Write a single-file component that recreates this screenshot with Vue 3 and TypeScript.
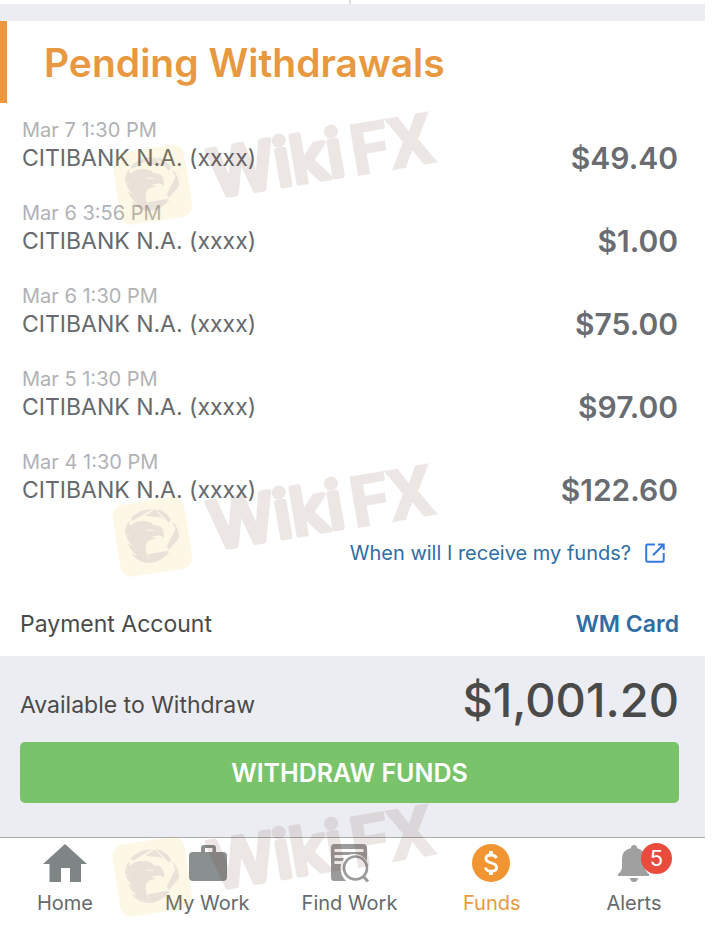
<script setup lang="ts">
interface Withdrawal {
  date: string
  account: string
  amount: string
}

type TabId = 'home' | 'work' | 'find' | 'funds' | 'alerts'

interface Tab {
  id: TabId
  label: string
  badge?: number
}

const withdrawals: Withdrawal[] = [
  { date: 'Mar 7 1:30 PM', account: 'CITIBANK N.A. (xxxx)', amount: '$49.40' },
  { date: 'Mar 6 3:56 PM', account: 'CITIBANK N.A. (xxxx)', amount: '$1.00' },
  { date: 'Mar 6 1:30 PM', account: 'CITIBANK N.A. (xxxx)', amount: '$75.00' },
  { date: 'Mar 5 1:30 PM', account: 'CITIBANK N.A. (xxxx)', amount: '$97.00' },
  { date: 'Mar 4 1:30 PM', account: 'CITIBANK N.A. (xxxx)', amount: '$122.60' },
]

const tabs: Tab[] = [
  { id: 'home', label: 'Home' },
  { id: 'work', label: 'My Work' },
  { id: 'find', label: 'Find Work' },
  { id: 'funds', label: 'Funds' },
  { id: 'alerts', label: 'Alerts', badge: 5 },
]

const activeTab: TabId = 'funds'
const watermarks: string[] = ['first', 'second', 'third']
</script>

<template>
  <div class="page">
    <div class="split"><span></span><span></span></div>
    <div class="band"></div>

    <main>
      <h1 class="title">Pending Withdrawals</h1>

      <ul class="list">
        <li v-for="item in withdrawals" :key="item.date" class="row">
          <span class="date">{{ item.date }}</span>
          <span class="account">{{ item.account }}</span>
          <span class="amount">{{ item.amount }}</span>
        </li>
      </ul>

      <a class="help" href="#funds-help">
        <span>When will I receive my funds?</span>
        <svg class="external" viewBox="0 0 20 20" aria-hidden="true">
          <path d="M10 1.4H2.6Q1.2 1.4 1.2 2.8V17.2Q1.2 18.7 2.6 18.7H17.2Q18.7 18.7 18.7 17.2V10M13 1.4H18.7V7M18.4 1.7L8 12.2" />
        </svg>
      </a>

      <div class="payment">
        <span>Payment Account</span>
        <a href="#payment-account">WM Card</a>
      </div>

      <section class="available">
        <div class="balance">
          <span class="balance-label">Available to Withdraw</span>
          <span class="balance-value">$1,001.20</span>
        </div>
        <button class="withdraw" type="button">WITHDRAW FUNDS</button>
      </section>
    </main>

    <nav class="tabs">
      <a
        v-for="tab in tabs"
        :key="tab.id"
        class="tab"
        :class="{ active: tab.id === activeTab }"
        :href="'#' + tab.id"
      >
        <span class="icon">
          <svg v-if="tab.id === 'home'" viewBox="0 0 44 44" aria-hidden="true">
            <path fill="#7f8585" d="M22 3L44 23H38V41H27V27H18V41H6.500V23H0Z" />
          </svg>
          <svg v-else-if="tab.id === 'work'" viewBox="0 0 44 44" aria-hidden="true">
            <path fill="#8a8f8f" d="M8 11H16V7Q16 4 19 4H28Q31 4 31 7V11H38Q42 11 42 15V36Q42 40 38 40H8Q4 40 4 36V15Q4 11 8 11ZM20 11H27.500V7H20Z" fill-rule="evenodd" />
          </svg>
          <svg v-else-if="tab.id === 'find'" viewBox="0 0 44 44" aria-hidden="true">
            <path fill="#9b9b9b" d="M6 3H35Q39 3 39 7V20Q34 13 27 13Q23 13 20 14H6.500V17H16L14.500 20H6.500V23H13L12.500 26Q12.500 35 18 40H6Q3 40 3 36V7Q3 3 6 3ZM6.500 8V11H35.500V8Z" fill-rule="evenodd" />
            <circle cx="27.500" cy="27" r="11.500" fill="none" stroke="#9b9b9b" stroke-width="2.600" />
            <path d="M35 35L40 40.500" stroke="#9b9b9b" stroke-width="3" />
          </svg>
          <svg v-else-if="tab.id === 'funds'" viewBox="0 0 44 44" aria-hidden="true">
            <circle cx="21" cy="22" r="19" fill="#f19533" />
            <path d="M26.500 17Q25 14 21 14Q16 14 16 17.600Q16 20.600 21 21.800Q26.600 23 26.600 26.400Q26.600 30.200 21 30.200Q16.400 30.200 15.400 26.600" fill="none" stroke="#fff" stroke-width="2.800" />
            <path d="M21 10V14M21 30V34" stroke="#fff" stroke-width="4" />
          </svg>
          <svg v-else viewBox="0 0 44 44" aria-hidden="true">
            <path fill="#a0a0a0" d="M22 4Q25 4 25 7Q33 9 33 18V26Q33 30 37 33V35H6V33Q10 30 10 26V18Q10 9 19 7Q19 4 22 4ZM18 37H26Q25.500 41 22 41Q18.500 41 18 37Z" />
          </svg>
          <span v-if="tab.badge" class="badge">{{ tab.badge }}</span>
        </span>
        <span>{{ tab.label }}</span>
      </a>
    </nav>

    <svg
      v-for="name in watermarks"
      :key="name"
      class="watermark"
      :class="name"
      viewBox="0 0 1050 420"
      aria-hidden="true"
    >
      <rect x="48" y="151" width="218" height="218" rx="34" transform="rotate(-9 157 260)" fill="#f0b91e" opacity=".11" />
      <g fill="#5a3c78" opacity=".11">
        <path d="M92 206Q116 178 158 177L124 197L98 212ZM136 197L164 178L188 203ZM168 178Q198 182 213 208L207 218ZM216 212Q239 236 237 264L207 300L200 290L226 238ZM143 313L203 302L208 306Q186 334 153 339Z" />
        <path fill-rule="evenodd" d="M75 254Q75 226 88 214Q86 224 90 228Q108 210 140 214Q154 216 162 226Q184 226 189 240Q194 251 191 264Q184 255 170 257L154 260Q164 262 168 267Q143 267 137 286Q135 314 156 339Q116 341 94 311L112 317Q92 302 84 282L98 287Q79 270 78 252L94 261Q76 246 75 254ZM134 236Q147 249 164 239Q150 241 134 236Z" />
      </g>
      <g class="brand" transform="translate(338 306) rotate(-9.700)" opacity=".11">
        <text class="round" x="4" y="-7">Wiki</text>
        <text class="square" x="432" y="0">FX</text>
      </g>
    </svg>
  </div>
</template>

<style>
body {
  margin: 0;
  background: #fff;
}
</style>

<style scoped>
.page {
  position: relative;
  padding-right: 11px;
  overflow: hidden;
  font-family: Inter, "Liberation Sans", sans-serif;
  color: #4a4a4a;
}

.split {
  display: grid;
  grid-template-columns: 1fr 1fr;
  height: 4px;
  padding-right: 4px;
}

.split span:first-child {
  border-right: 2px solid #dcdde0;
}

.band {
  height: 17px;
  background: #ecedf2;
}

.title {
  margin: 0;
  padding: 2px 0 0 37px;
  border-left: 7px solid #ec9840;
  line-height: 80px;
  font-size: 39px;
  font-weight: 600;
  color: #e8993f;
}

.list {
  display: grid;
  gap: 27px;
  margin: 0;
  padding: 13px 27px 0 22px;
  list-style: none;
}

.row {
  display: grid;
  grid-template-columns: 1fr auto;
  grid-template-rows: 28px 28px;
  align-items: center;
}

.date {
  grid-column: 1 / 3;
  font-size: 20px;
  color: #b1b2b6;
}

.account {
  font-size: 23px;
  color: #66696d;
}

.amount {
  font-size: 30px;
  font-weight: 600;
  line-height: 28px;
  color: #696c71;
}

.help {
  display: flex;
  justify-content: flex-end;
  align-items: center;
  gap: 14px;
  padding: 35px 40px 0 0;
  line-height: 28px;
  font-size: 20px;
  color: #2f6da5;
  text-decoration: none;
}

.external {
  width: 20px;
  height: 20px;
  fill: none;
  stroke: #3478e5;
  stroke-width: 2;
}

.payment {
  display: flex;
  justify-content: space-between;
  padding: 42px 26px 17px 20px;
  line-height: 30px;
  font-size: 23px;
}

.payment a {
  font-weight: 600;
  color: #2f6da5;
  text-decoration: none;
}

.available {
  padding: 13px 26px 34px 20px;
  background: #ecedf2;
}

.balance {
  display: flex;
  justify-content: space-between;
  align-items: center;
  height: 60px;
  margin-bottom: 13px;
}

.balance-label {
  padding-top: 12px;
  font-size: 23px;
}

.balance-value {
  font-size: 47px;
  font-weight: 500;
}

.withdraw {
  display: block;
  width: 100%;
  height: 61px;
  padding: 0;
  border: 0;
  border-radius: 5px;
  background: #79c36a;
  font-family: inherit;
  font-size: 25px;
  font-weight: 600;
  color: #fff;
}

.tabs {
  display: flex;
  justify-content: space-between;
  padding: 3px 15px 25px 9px;
  border-top: 1px solid #a9abae;
}

.tab {
  display: flex;
  flex-direction: column;
  align-items: center;
  width: 112px;
  line-height: 30px;
  font-size: 20px;
  color: #66696d;
  text-decoration: none;
}

.tab.active {
  color: #e8993f;
}

.icon {
  position: relative;
  height: 47px;
}

.icon svg {
  display: block;
  width: 44px;
  height: 44px;
}

.badge {
  position: absolute;
  top: 2px;
  left: 29px;
  width: 31px;
  height: 31px;
  border-radius: 50%;
  background: #e94b3c;
  color: #fff;
  font-size: 22px;
  line-height: 31px;
  text-align: center;
}

.watermark {
  position: absolute;
  left: 100px;
  width: 350px;
  height: 140px;
  pointer-events: none;
}

.first {
  top: 98px;
}

.second {
  top: 450px;
}

.third {
  top: 790px;
}

.brand {
  fill: #5a281e;
  stroke: #5a281e;
}

.round {
  font-family: Inter, "Liberation Sans", sans-serif;
  font-size: 196px;
  font-weight: 500;
  stroke-width: 16px;
  stroke-linejoin: round;
}

.square {
  font-family: Roboto, "Liberation Sans", sans-serif;
  font-size: 212px;
  font-weight: 700;
  stroke-width: 5px;
}
</style>
